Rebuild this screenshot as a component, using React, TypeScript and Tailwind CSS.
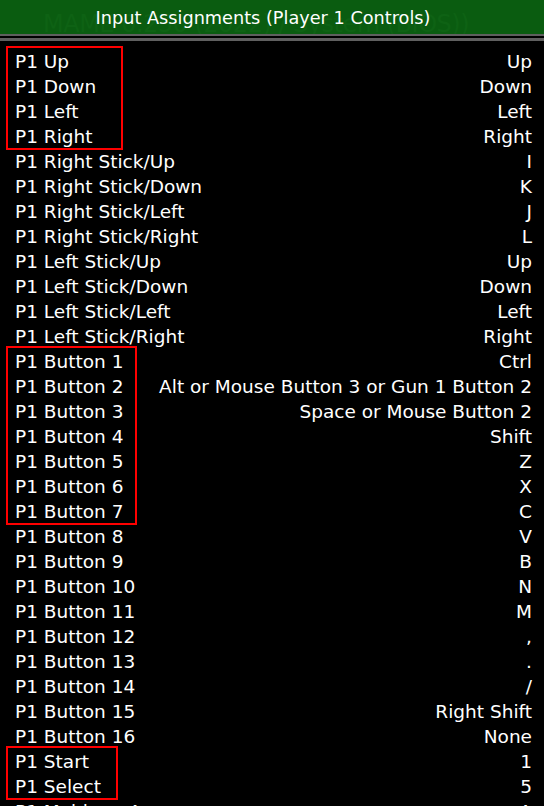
import React from 'react';

type Row = [string, string];

const groups: { rows: Row[]; box?: string }[] = [
  {
    box: 'w-[117px]',
    rows: [
      ['P1 Up', 'Up'],
      ['P1 Down', 'Down'],
      ['P1 Left', 'Left'],
      ['P1 Right', 'Right'],
    ],
  },
  {
    rows: [
      ['P1 Right Stick/Up', 'I'],
      ['P1 Right Stick/Down', 'K'],
      ['P1 Right Stick/Left', 'J'],
      ['P1 Right Stick/Right', 'L'],
      ['P1 Left Stick/Up', 'Up'],
      ['P1 Left Stick/Down', 'Down'],
      ['P1 Left Stick/Left', 'Left'],
      ['P1 Left Stick/Right', 'Right'],
    ],
  },
  {
    box: 'w-[131px]',
    rows: [
      ['P1 Button 1', 'Ctrl'],
      ['P1 Button 2', 'Alt or Mouse Button 3 or Gun 1 Button 2'],
      ['P1 Button 3', 'Space or Mouse Button 2'],
      ['P1 Button 4', 'Shift'],
      ['P1 Button 5', 'Z'],
      ['P1 Button 6', 'X'],
      ['P1 Button 7', 'C'],
    ],
  },
  {
    rows: [
      ['P1 Button 8', 'V'],
      ['P1 Button 9', 'B'],
      ['P1 Button 10', 'N'],
      ['P1 Button 11', 'M'],
      ['P1 Button 12', ','],
      ['P1 Button 13', '.'],
      ['P1 Button 14', '/'],
      ['P1 Button 15', 'Right Shift'],
      ['P1 Button 16', 'None'],
    ],
  },
  {
    box: 'w-[112px]',
    rows: [
      ['P1 Start', '1'],
      ['P1 Select', '5'],
    ],
  },
  { rows: [['P1 Mahjong A', 'A']] },
];

export default function App() {
  return (
    <div className="w-[544px] h-[806px] bg-black overflow-hidden text-white font-['DejaVu_Sans',sans-serif]">
      {/* title bar, faint game name shows through behind the menu title */}
      <div className="relative h-[34px] bg-[#0a5c10] overflow-hidden">
        <div className="absolute left-[43px] top-[12px] text-[24px] leading-none whitespace-nowrap tracking-[-0.5px] text-[#0e6214]">
          MAME 0.250 (2022) / System (BIOS))
        </div>
        <div className="relative text-center text-[17.7px] leading-[36px] pr-[18px]">
          Input Assignments (Player 1 Controls)
        </div>
      </div>
      <div className="h-[2px] bg-[#5f5f5f]" />
      <div className="h-[2px] bg-black" />
      <div className="h-[3px] bg-[#5f5f5f]" />

      <div className="pt-[8px]">
        {groups.map((g, gi) => (
          <div key={gi} className="relative">
            {g.rows.map(([name, key]) => (
              <div key={name} className="h-[25px] flex items-center justify-between pl-[15px] pr-[12px] text-[18.5px] whitespace-nowrap">
                <span>{name}</span>
                <span>{key}</span>
              </div>
            ))}
            {g.box && (
              <div className={`absolute left-[6px] top-[-3px] bottom-[-1px] border-2 border-[#ff0000] ${g.box}`} />
            )}
          </div>
        ))}
      </div>
    </div>
  );
}
